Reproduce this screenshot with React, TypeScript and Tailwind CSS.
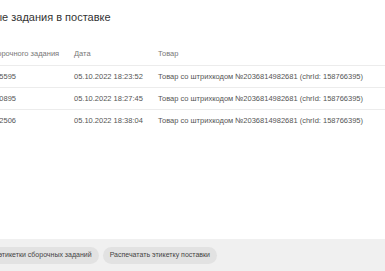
import React from 'react';

const rows = [
  { id: '6283645595', date: '05.10.2022 18:23:52', item: 'Товар со штрихкодом №2036814982681 (chrId: 158766395)' },
  { id: '6283650895', date: '05.10.2022 18:27:45', item: 'Товар со штрихкодом №2036814982681 (chrId: 158766395)' },
  { id: '6283672506', date: '05.10.2022 18:38:04', item: 'Товар со штрихкодом №2036814982681 (chrId: 158766395)' },
];

export default function App() {
  return (
    <div
      className="w-[385px] h-[271px] overflow-hidden bg-white flex flex-col"
      style={{ fontFamily: '"Liberation Sans", Arial, sans-serif' }}
    >
      <div className="flex-1">
        {/* Title */}
        <div className="ml-[-50px] pt-[10px] text-[11px] leading-[14px] text-[#333] whitespace-nowrap">
          Сборочные задания в поставке
        </div>

        {/* Table */}
        <div className="mt-[18px]">
          <div className="grid grid-cols-[110px_84px_1fr] h-[24px] items-center border-b border-[#ececec] ml-[-36px] text-[7.5px] text-[#777] whitespace-nowrap">
            <div>Номер сборочного задания</div>
            <div>Дата</div>
            <div>Товар</div>
          </div>
          {rows.map((r, i) => (
            <div
              key={r.id}
              className={
                'grid grid-cols-[110px_84px_1fr] h-[22px] items-center ml-[-36px] text-[7.5px] text-[#555] whitespace-nowrap ' +
                (i < rows.length - 1 ? 'border-b border-[#ececec]' : '')
              }
            >
              <div className="text-right pr-[58px]">{r.id}</div>
              <div>{r.date}</div>
              <div>{r.item}</div>
            </div>
          ))}
        </div>
      </div>

      {/* Footer */}
      <div className="h-[32px] bg-[#f0f0f0] flex items-center justify-end gap-[4px] pr-[168px] whitespace-nowrap">
        <button className="h-[17px] px-[7px] rounded-full bg-[#e2e2e2] text-[7px] text-[#444]">
          Распечатать этикетки сборочных заданий
        </button>
        <button className="h-[17px] px-[7px] rounded-full bg-[#e2e2e2] text-[7px] text-[#444]">
          Распечатать этикетку поставки
        </button>
      </div>
    </div>
  );
}
